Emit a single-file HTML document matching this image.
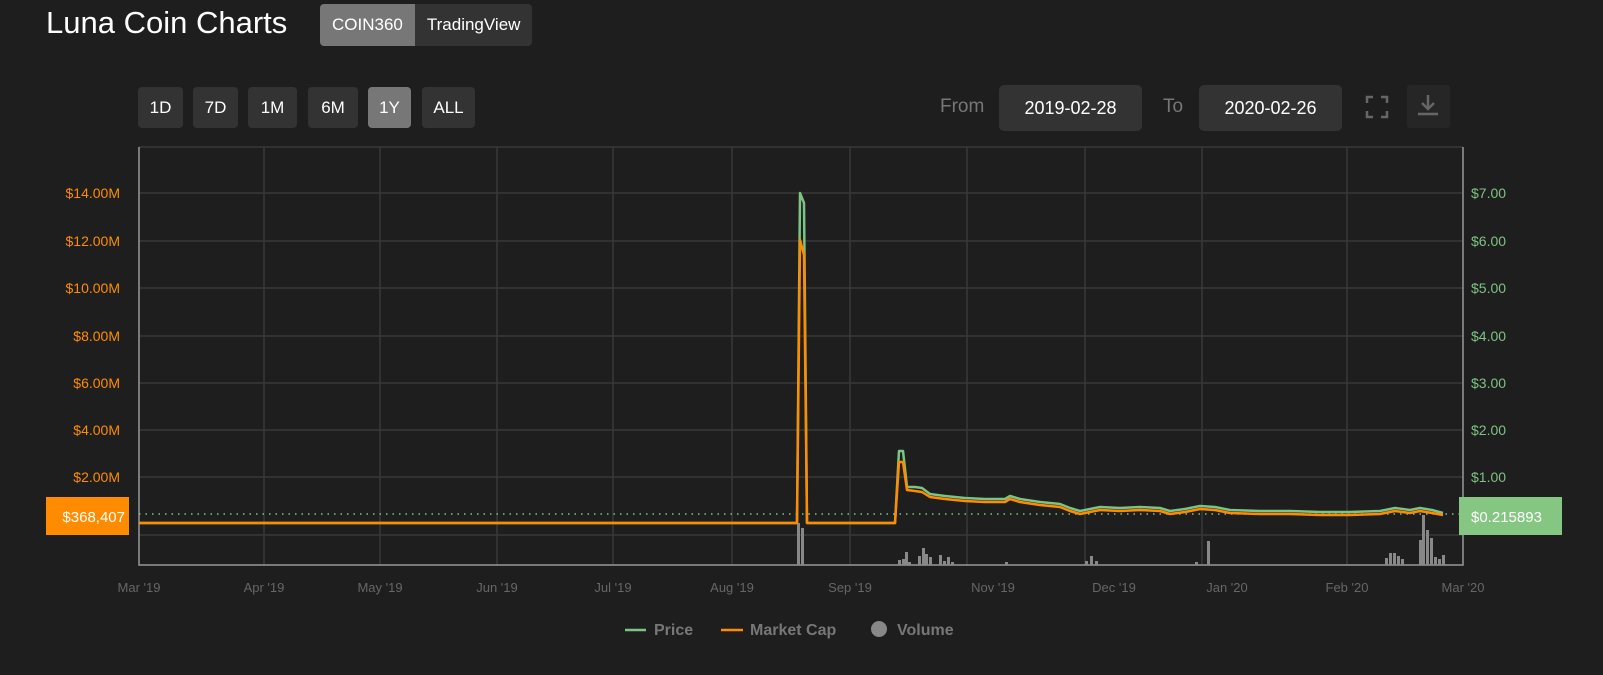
<!DOCTYPE html>
<html><head><meta charset="utf-8"><style>
html,body{margin:0;padding:0;background:#1e1e1e;width:1603px;height:675px;overflow:hidden;font-family:"Liberation Sans",sans-serif;}
.abs{position:absolute;}
.title{left:46px;top:5px;font-size:31px;color:#fff;}
.tg{left:320px;top:4px;height:42px;border-radius:4px;overflow:hidden;display:flex;background:#333;}
.tg div{color:#fff;font-size:17px;line-height:42px;padding:0 12px;}
.tg .on{background:#777;}
.pb{top:87px;height:41px;line-height:41px;background:#333;color:#fff;font-size:17px;text-align:center;border-radius:4px;}
.lbl{color:#777;font-size:19px;top:96px;}
.db{top:85px;height:46px;line-height:46px;width:143px;background:#333;border-radius:5px;color:#fff;font-size:18px;text-align:center;}
</style></head><body>
<div class="abs title">Luna Coin Charts</div>
<div class="abs tg"><div class="on">COIN360</div><div>TradingView</div></div>
<div class="abs pb" style="left:138px;width:45px">1D</div>
<div class="abs pb" style="left:193px;width:45px">7D</div>
<div class="abs pb" style="left:248px;width:49px">1M</div>
<div class="abs pb" style="left:308px;width:50px">6M</div>
<div class="abs pb" style="left:368px;width:43px;background:#777">1Y</div>
<div class="abs pb" style="left:422px;width:53px">ALL</div>
<div class="abs lbl" style="left:940px">From</div>
<div class="abs db" style="left:999px">2019-02-28</div>
<div class="abs lbl" style="left:1163px">To</div>
<div class="abs db" style="left:1199px">2020-02-26</div>
<svg class="abs" style="left:0;top:0" width="1603" height="675" xmlns="http://www.w3.org/2000/svg">
<g fill="none" stroke="#666" stroke-width="2.5">
<path d="M1367 103v-6h6M1381 97h6v6M1387 111v6h-6M1373 117h-6v-6"/>
</g>
<rect x="1407" y="85" width="43" height="43" rx="3" fill="#262626"/>
<path d="M1428 95v14M1422 103l6 6 6-6M1418 114h20" stroke="#666" stroke-width="2.5" fill="none"/>
<g stroke="#383838" stroke-width="1.5">
<line x1="139" y1="193" x2="1463" y2="193"/><line x1="139" y1="241" x2="1463" y2="241"/>
<line x1="139" y1="288" x2="1463" y2="288"/><line x1="139" y1="336" x2="1463" y2="336"/>
<line x1="139" y1="383" x2="1463" y2="383"/><line x1="139" y1="430" x2="1463" y2="430"/>
<line x1="139" y1="477" x2="1463" y2="477"/><line x1="139" y1="535" x2="1463" y2="535"/>
<line x1="264" y1="147" x2="264" y2="565"/><line x1="380" y1="147" x2="380" y2="565"/>
<line x1="497" y1="147" x2="497" y2="565"/><line x1="613" y1="147" x2="613" y2="565"/>
<line x1="732" y1="147" x2="732" y2="565"/><line x1="850" y1="147" x2="850" y2="565"/>
<line x1="967" y1="147" x2="967" y2="565"/><line x1="1085" y1="147" x2="1085" y2="565"/>
<line x1="1202" y1="147" x2="1202" y2="565"/><line x1="1347" y1="147" x2="1347" y2="565"/>
<line x1="139" y1="147" x2="1463" y2="147"/>
</g>
<path d="M139 147V565H1463V147" stroke="#999" stroke-width="1.5" fill="none"/>
<g fill="#888">
<rect x="797" y="523" width="3" height="42"/><rect x="801" y="528" width="3" height="37"/>
<rect x="898" y="560" width="3" height="5"/><rect x="902" y="559" width="3" height="6"/><rect x="905" y="552" width="3" height="13"/><rect x="908" y="562" width="3" height="3"/>
<rect x="918" y="556" width="3" height="9"/><rect x="922" y="548" width="3" height="17"/><rect x="925" y="554" width="3" height="11"/><rect x="929" y="557" width="3" height="8"/>
<rect x="939" y="555" width="3" height="10"/><rect x="943" y="561" width="3" height="4"/><rect x="947" y="557" width="3" height="8"/><rect x="951" y="562" width="3" height="3"/>
<rect x="1005" y="562" width="3" height="3"/><rect x="1085" y="561" width="3" height="4"/><rect x="1090" y="556" width="3" height="9"/><rect x="1095" y="561" width="3" height="4"/>
<rect x="1207" y="541" width="3" height="24"/><rect x="1195" y="562" width="3" height="3"/>
<rect x="1385" y="558" width="3" height="7"/><rect x="1389" y="553" width="3" height="12"/><rect x="1393" y="553" width="3" height="12"/><rect x="1397" y="556" width="3" height="9"/><rect x="1401" y="559" width="3" height="6"/>
<rect x="1419" y="540" width="3" height="25"/><rect x="1422" y="515" width="3" height="50"/><rect x="1426" y="530" width="3" height="35"/><rect x="1430" y="538" width="3" height="27"/>
<rect x="1434" y="557" width="3" height="8"/><rect x="1438" y="559" width="3" height="6"/><rect x="1442" y="555" width="3" height="10"/>
</g>
<line x1="139" y1="514" x2="1459" y2="514" stroke="#7dc383" stroke-width="1.5" stroke-dasharray="1.5 5"/>
<polyline fill="none" stroke="#7dc383" stroke-width="2.5" stroke-linejoin="round" points="139,523 797,523 800,193 804,203 807,523 895,523 899,451 903,451 907,487 915,487 922,488 930,494 945,496 965,498 985,499 1005,499 1010,496 1020,499 1040,502 1060,504 1070,508 1080,511 1090,509 1100,507 1120,508 1140,507 1160,508 1170,511 1185,509 1200,506 1215,507 1230,510 1260,511 1290,511 1320,512 1350,512 1380,511 1395,508 1410,510 1420,508 1432,510 1443,513"/>
<polyline fill="none" stroke="#ff8c00" stroke-width="2.5" stroke-linejoin="round" points="139,523 797,523 800,240 804,255 807,523 895,523 899,462 903,462 907,490 915,491 922,492 930,497 945,499 965,501 985,502 1005,502 1010,499 1020,502 1040,505 1060,507 1070,511 1080,514 1090,512 1100,510 1120,511 1140,510 1160,511 1170,514 1185,512 1200,509 1215,510 1230,513 1260,514 1290,514 1320,515 1350,515 1380,514 1395,511 1410,513 1420,511 1432,513 1443,515"/>
<g font-size="14" fill="#ff8c00" text-anchor="end" font-family="Liberation Sans,sans-serif">
<text x="120" y="198">$14.00M</text><text x="120" y="246">$12.00M</text><text x="120" y="293">$10.00M</text>
<text x="120" y="341">$8.00M</text><text x="120" y="388">$6.00M</text><text x="120" y="435">$4.00M</text><text x="120" y="482">$2.00M</text>
</g>
<g font-size="14" fill="#7dc383" font-family="Liberation Sans,sans-serif">
<text x="1471" y="198">$7.00</text><text x="1471" y="246">$6.00</text><text x="1471" y="293">$5.00</text>
<text x="1471" y="341">$4.00</text><text x="1471" y="388">$3.00</text><text x="1471" y="435">$2.00</text><text x="1471" y="482">$1.00</text>
</g>
<rect x="46" y="497" width="83" height="38" fill="#ff8c00"/>
<text x="125" y="522" font-size="15" fill="#fff" text-anchor="end" font-family="Liberation Sans,sans-serif">$368,407</text>
<rect x="1459" y="497" width="103" height="38" fill="#85c782"/>
<text x="1471" y="522" font-size="15" fill="#fff" font-family="Liberation Sans,sans-serif">$0.215893</text>
<g font-size="13" fill="#666" text-anchor="middle" font-family="Liberation Sans,sans-serif">
<text x="139" y="592">Mar '19</text><text x="264" y="592">Apr '19</text><text x="380" y="592">May '19</text>
<text x="497" y="592">Jun '19</text><text x="613" y="592">Jul '19</text><text x="732" y="592">Aug '19</text>
<text x="850" y="592">Sep '19</text><text x="993" y="592">Nov '19</text><text x="1114" y="592">Dec '19</text>
<text x="1227" y="592">Jan '20</text><text x="1347" y="592">Feb '20</text><text x="1463" y="592">Mar '20</text>
</g>
<line x1="625" y1="630" x2="646" y2="630" stroke="#7dc383" stroke-width="2.5"/>
<line x1="721" y1="630" x2="743" y2="630" stroke="#ff8c00" stroke-width="2.5"/>
<circle cx="879" cy="629" r="8" fill="#888"/>
<g font-size="16" font-weight="bold" fill="#777" font-family="Liberation Sans,sans-serif">
<text x="654" y="635">Price</text><text x="750" y="635">Market Cap</text><text x="897" y="635">Volume</text>
</g>
</svg>
</body></html>
